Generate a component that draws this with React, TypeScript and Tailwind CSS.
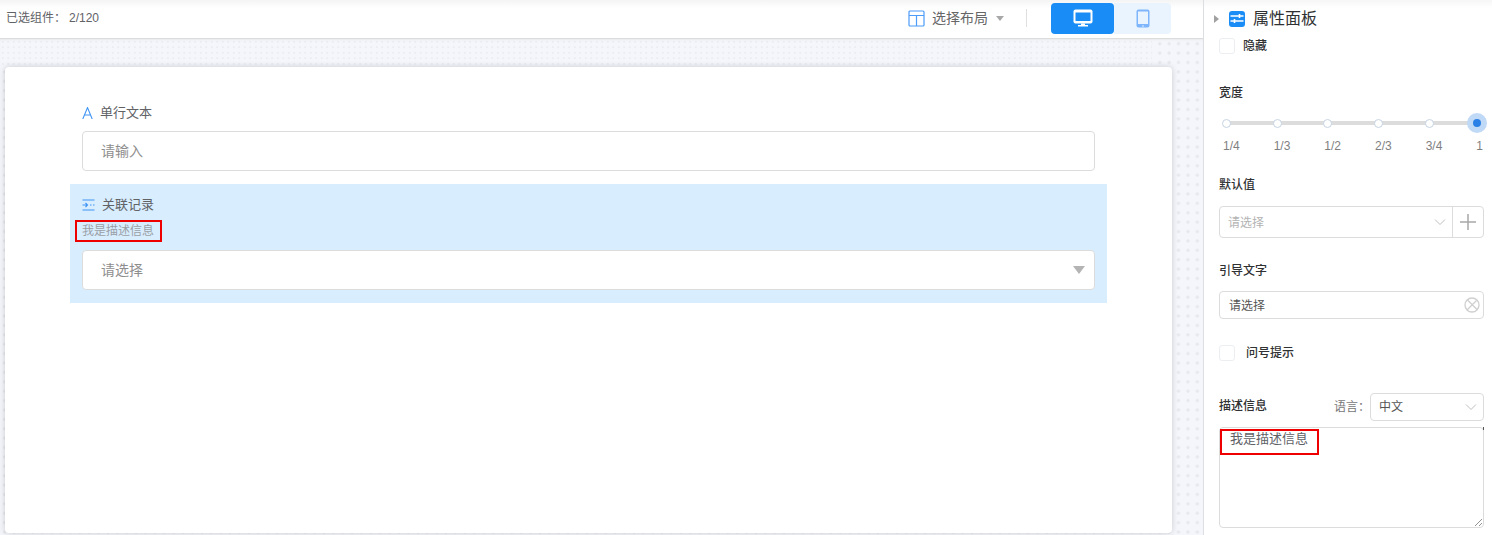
import React from "react";

function Chevron({ className }: { className: string }) {
  return (
    <svg className={className} width="12" height="8" viewBox="0 0 12 8" fill="none" stroke="#bfbfbf" strokeWidth="1">
      <path d="M1 1.5 L6 6.5 L11 1.5" />
    </svg>
  );
}

function Label({ children, className = "" }: { children: React.ReactNode; className?: string }) {
  return <div className={`text-[12px] leading-[18px] font-medium text-[#303133] ${className}`}>{children}</div>;
}

function Check() {
  return <span className="w-[16px] h-[16px] rounded-[3px] border border-[#eceef1] bg-white shrink-0" />;
}

const marks = ["1/4", "1/3", "1/2", "2/3", "3/4", "1"];

export default function App() {
  return (
    <div className="flex w-[1492px] h-[535px] overflow-hidden bg-white font-['Liberation_Sans','Noto_Sans_CJK_SC',sans-serif]">
      <div className="w-[1204px] shrink-0 flex flex-col border-r border-[#dcdee2] h-full">
        <header className="h-[39px] shrink-0 flex items-center border-b border-[#dcdcdc] bg-[linear-gradient(#f4f4f4,#ffffff_8px)] pl-[6px]">
          <div className="text-[12px] text-[#606266] flex pb-[2px]">
            <span>已选组件：</span>
            <span className="ml-[3px]">2/120</span>
          </div>
          <div className="ml-auto flex items-center pr-[32px] pb-[2px]">
            <svg width="17" height="17" viewBox="0 0 17 17" fill="none" stroke="#4d9cf8" strokeWidth="1.2" className="mr-[7px]">
              <rect x="1" y="1" width="15" height="15" rx="1" />
              <path d="M1 5.5H16M8.5 5.5V16" />
            </svg>
            <span className="text-[14px] text-[#666666]">选择布局</span>
            <span className="ml-[8px] w-0 h-0 border-x-[4px] border-x-transparent border-t-[5px] border-t-[#a8a8a8]" />
            <span className="ml-[22px] w-px h-[18px] bg-[#dfdfdf]" />
            <div className="ml-[24px] flex h-[31px]">
              <div className="w-[63px] bg-[#1a8cf5] rounded-[4px] flex items-center justify-center">
                <svg width="20" height="18" viewBox="0 0 20 18">
                  <rect x="0.5" y="0.5" width="19" height="14" rx="2" fill="#fff" />
                  <rect x="2.5" y="3.5" width="15" height="8.5" fill="#1a8cf5" />
                  <path d="M8 14.5H12V16H15V17.5H5V16H8Z" fill="#fff" />
                </svg>
              </div>
              <div className="w-[57px] bg-[#e9f4ff] rounded-r-[4px] flex items-center justify-center">
                <svg width="14" height="19" viewBox="0 0 14 19">
                  <rect x="0.5" y="0.5" width="13" height="18" rx="2" fill="#7fb5fb" />
                  <rect x="2" y="2.5" width="10" height="12.5" fill="#e9f4ff" />
                  <circle cx="7" cy="17" r="0.8" fill="#e9f4ff" />
                </svg>
              </div>
            </div>
          </div>
        </header>
        <main className="flex-1 min-h-0 bg-[#f5f6fb] bg-[radial-gradient(#e6e8ed_1.4px,transparent_1.7px)] bg-[size:9.4px_9.4px] pl-[5px] pr-[31px] shadow-[inset_0_2px_3px_-2px_#dddddd]">
          <div className="h-[28px] -ml-[5px] w-[1152px] bg-[#f5f6fb] bg-[radial-gradient(#eaecf1_0.8px,transparent_1px)] bg-[size:5.5px_5.5px] shadow-[inset_0_2px_3px_-2px_#dddddd]" />
          <div className="h-[466px] bg-white rounded-[4px] shadow-[0_0_6px_rgba(0,0,0,0.18)] px-[65px] pt-[35px]">
            <div className="px-[12px]">
              <div className="flex items-center h-[22px] text-[13px] text-[#606266]">
                <svg width="11" height="12" viewBox="0 0 11 12" fill="none" stroke="#3f94f3" strokeWidth="1.1" className="mr-[7px]">
                  <path d="M0.8 12L5.5 0.6L10.2 12M2.4 8H8.6" />
                </svg>
                单行文本
              </div>
              <div className="mt-[7px] h-[40px] border border-[#dcdcdc] rounded-[4px] bg-white flex items-center pl-[18px] text-[14px] text-[#8e8e8e]">请输入</div>
            </div>
            <div className="mt-[13px] h-[119px] bg-[#d8edfe] px-[12px] pt-[10px]">
              <div className="flex items-center h-[22px] text-[13px] text-[#606266]">
                <svg width="13" height="12" viewBox="0 0 13 12" fill="none" stroke="#3f94f3" strokeWidth="1.1" className="mr-[7px]">
                  <path d="M0.5 1H12.5M0.5 11H12.5M0.5 6H5M3.5 4L5.5 6L3.5 8M8 6H9.5M11 6H12.5" />
                </svg>
                关联记录
              </div>
              <div className="relative mt-[5px] h-[20px] w-fit leading-[20px] text-[12px] text-[#9a9fa6]">
                我是描述信息
                <span className="absolute left-[-7px] top-[-1px] w-[87px] h-[22px] border-2 border-[#ee0000]" />
              </div>
              <div className="mt-[9px] h-[40px] border border-[#dcdcdc] rounded-[4px] bg-white flex items-center pl-[18px] pr-[9px] text-[14px] text-[#8e8e8e]">
                请选择
                <span className="ml-auto w-0 h-0 border-x-[6px] border-x-transparent border-t-[8px] border-t-[#b4b4b4]" />
              </div>
            </div>
          </div>
        </main>
      </div>
      <aside className="flex-1 min-w-0 bg-[linear-gradient(#f6f6f6,#ffffff_8px)] pl-[15px] pr-[8px]">
        <div className="flex items-center h-[36px] pt-[1px] -ml-[5px]">
          <span className="w-0 h-0 border-y-[4px] border-y-transparent border-l-[5px] border-l-[#a0a0a0]" />
          <span className="ml-[10px] w-[16px] h-[16px] rounded-[3px] bg-[#1a8cf5] flex items-center justify-center">
            <svg width="14" height="11" viewBox="0 0 14 11" stroke="#fff" strokeWidth="1.6" fill="none">
              <path d="M0.5 3H13.5M9.5 1V5M13.5 8H0.5M4.5 6V10" />
            </svg>
          </span>
          <span className="ml-[8px] text-[16px] text-[#303133]">属性面板</span>
        </div>
        <div className="flex items-center h-[18px] mt-[1px]">
          <Check />
          <span className="ml-[8px] text-[12px] text-[#303133] font-medium">隐藏</span>
        </div>
        <Label className="mt-[29px]">宽度</Label>
        <div className="relative mt-[11px] ml-[2px] w-[266px] h-[20px] flex items-center pl-[1px]">
          <span className="absolute left-[5px] right-[10px] top-[8px] h-[4px] bg-[#dcdcdc]" />
          {marks.slice(0, 5).map((m) => (
            <span key={m} className="relative w-[9px] h-[9px] mr-[41.7px] rounded-full bg-white border border-[#c5d3e3] shrink-0" />
          ))}
          <span className="relative w-[20px] h-[20px] -ml-[8px] rounded-full bg-[#c0d9f7] flex items-center justify-center shrink-0">
            <span className="w-[8px] h-[8px] rounded-full bg-[#2a80e6]" />
          </span>
        </div>
        <div className="mt-[4px] ml-[4px] w-[260px] flex justify-between text-[12px] leading-[18px] text-[#7f7f7f]">
          {marks.map((m) => (
            <span key={m}>{m}</span>
          ))}
        </div>
        <Label className="mt-[21px]">默认值</Label>
        <div className="mt-[12px] h-[32px] border border-[#dcdcdc] rounded-[4px] flex items-center text-[12px] text-[#b3b3b3]">
          <span className="pl-[8px] pt-[2px]">请选择</span>
          <Chevron className="ml-auto mr-[6px]" />
          <span className="w-[31px] h-full border-l border-[#dcdcdc] flex items-center justify-center">
            <svg width="16" height="16" viewBox="0 0 16 16" stroke="#a8a8a8" strokeWidth="1.5">
              <path d="M0 8H16M8 0V16" />
            </svg>
          </span>
        </div>
        <Label className="mt-[24px]">引导文字</Label>
        <div className="mt-[11px] h-[28px] border border-[#dcdcdc] rounded-[4px] flex items-center text-[12px] text-[#555555] pl-[9px] pr-[3px]">
          <span className="pt-[2px]">请选择</span>
          <svg width="16" height="16" viewBox="0 0 16 16" fill="none" stroke="#cfcfcf" strokeWidth="1.3" className="ml-auto">
            <circle cx="8" cy="8" r="7" />
            <path d="M3.5 3L13 12.5M12.5 3.5L3 13" />
          </svg>
        </div>
        <div className="flex items-center h-[18px] mt-[25px]">
          <Check />
          <span className="ml-[11px] text-[12px] text-[#303133] font-medium">问号提示</span>
        </div>
        <div className="mt-[31px] flex items-center">
          <Label className="mb-[3px]">描述信息</Label>
          <span className="ml-auto text-[12px] text-[#777777]">语言：</span>
          <div className="h-[28px] w-[114px] border border-[#dcdcdc] rounded-[4px] flex items-center pl-[8px] text-[12px] text-[#555555]">
            中文
            <Chevron className="ml-auto mr-[6px]" />
          </div>
        </div>
        <div className="relative mt-[6px] h-[101px] border border-[#dcdcdc] rounded-[4px] pl-[10px] pt-[2px] text-[13px] leading-[18px] text-[#606266]">
          我是描述信息
          <span className="absolute left-0 top-[1px] w-[99px] h-[26px] border-2 border-[#ee0000]" />
          <span className="absolute right-[-1px] top-[-1px] w-px h-[3px] bg-[#555555]" />
          <svg width="8" height="8" viewBox="0 0 8 8" stroke="#777777" strokeWidth="0.8" className="absolute right-[1px] bottom-[1px]">
            <path d="M1 8L8 1M5 8L8 5" />
          </svg>
        </div>
      </aside>
    </div>
  );
}
